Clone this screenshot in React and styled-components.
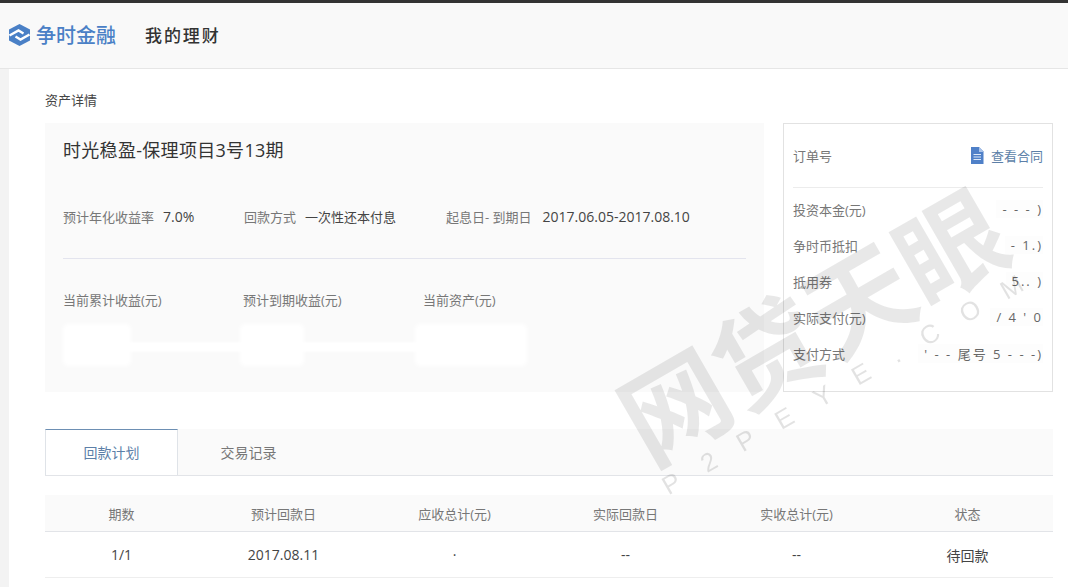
import React from "react";
import styled, { createGlobalStyle } from "styled-components";

const Global = createGlobalStyle`
  html, body { margin: 0; padding: 0; background: #fff; }
  body { font-family: "Open Sans", "Noto Sans CJK SC", sans-serif; color: #333; width: 1068px; height: 587px; overflow: hidden; }
  * { box-sizing: border-box; }
`;
const Page = styled.div`position: relative; width: 1068px; height: 587px; overflow: hidden; border-top: 3px solid #333;`;
const Header = styled.header`
  height: 66px; background: #f9f9f9; border-bottom: 1px solid #e6e6e6;
  display: flex; align-items: center; padding: 0 0 2px 8px;
`;
const Brand = styled.div`display: flex; align-items: center; gap: 5px; width: 137px; color: #4a80c6; font-size: 20px; font-weight: 500;`;
const PageName = styled.div`font-size: 17px; font-weight: 500; letter-spacing: 1.9px; color: #333;`;
const Body = styled.div`display: flex; height: 518px;`;
const Rail = styled.div`width: 9px; background: #f3f3f3;`;
const Main = styled.main`flex: 1; padding: 21px 15px 0 36px;`;
const Crumb = styled.div`font-size: 13px; line-height: 20px; color: #444; height: 33px;`;
const Top = styled.section`display: flex; gap: 19px; height: 269px;`;
const Card = styled.div`position: relative; width: 719px; background: #fafafa; padding: 14px 18px 0;`;
const Title = styled.h1`margin: 0; font-size: 18px; font-weight: 400; line-height: 26px; color: #333; letter-spacing: .3px;`;
const Facts = styled.div`display: flex; margin-top: 43px; height: 40px;`;
const Fact = styled.div`display: flex; align-items: center; gap: ${p => p.$gap || 8}px; width: ${p => p.$w}px; height: 20px; white-space: nowrap;`;
const Label = styled.span`font-size: 13px; color: #777;`;
const Value = styled.span`font-size: ${p => p.$size || 14}px; color: #444;`;
const Rule = styled.div`height: 1px; background: #e3e4ee; margin-top: 12px;`;
const Metrics = styled.div`display: flex; margin-top: 29px;`;
const Metric = styled.div`width: 180px;`;
const Blob = styled.div`
  margin-top: 14px; margin-left: ${p => p.$x || 0}px; width: ${p => p.$w}px; height: 42px;
  background: #fff; border-radius: 5px; filter: blur(2px);
`;
const Band = styled.div`position: absolute; left: 70px; top: 219px; width: 340px; height: 10px; background: #fff; filter: blur(1px);`;
const Side = styled.aside`flex: 1; border: 1px solid #e2e2e2; background: #fff; padding: 0 9px;`;
const OrderRow = styled.div`display: flex; align-items: center; height: 64px; padding-bottom: 1px; border-bottom: 1px solid #ececec;`;
const Order = styled.span`font-size: 13px; color: #777; margin-right: auto;`;
const Contract = styled.a`display: flex; align-items: center; gap: 7px; font-size: 13px; color: #5c7fa8;`;
const Rows = styled.div`padding-top: 3px;`;
const Row = styled.div`display: flex; justify-content: space-between; align-items: center; height: 36px;`;
const Smudge = styled.span`font-size: 13px; color: #666; background: #fdfdfd; padding-left: 6px; letter-spacing: 2px; white-space: nowrap;`;
const Tabs = styled.nav`display: flex; height: 47px; margin-top: 37px; background: #fafafa; border-bottom: 1px solid #e2e4e8;`;
const Tab = styled.div`
  width: ${p => p.$w}px; height: 46px; display: flex; align-items: center; justify-content: center; font-size: 14px; padding-bottom: 1px;
  color: ${p => p.$on ? "#5c7fa8" : "#777"};
  background: ${p => p.$on ? "#fff" : "transparent"};
  border: ${p => p.$on ? "1px solid #dfe3e8" : "0"};
  border-top: ${p => p.$on ? "1px solid #6d8fb3" : "0"};
  border-bottom: 0;
`;
const Grid = styled.div`
  display: grid; grid-template-columns: 153px repeat(5, 171px); align-items: center; text-align: center;
  height: ${p => p.$h}px; margin-top: ${p => p.$mt || 0}px;
  background: ${p => p.$head ? "#fafafa" : "#fff"};
  border-bottom: 1px solid ${p => p.$head ? "#e2e4e8" : "#eeeeee"};
  font-size: ${p => p.$head ? 13 : 14}px; color: ${p => p.$head ? "#777" : "#444"};
`;
const Mark = styled.svg`position: absolute; left: 0; top: -3px; width: 1068px; height: 587px; pointer-events: none;`;
const WmTitle = styled.text`font-family: "Noto Sans CJK SC", sans-serif; font-weight: 700; font-size: 106px; fill: #000; opacity: .085;`;
const WmSub = styled.text`font-family: "Liberation Sans", sans-serif; font-size: 26px; fill: #000; opacity: .11;`;

const Logo = () => (
  <svg width="23" height="24" viewBox="0 0 23 24">
    <path d="M11.5 1 22 6.5v11L11.5 23 1 17.5v-11Z" fill="#4a80c6" />
    <path d="M1.5 12.5 10.5 7.5 15.5 10.5M21.5 11.5 12.5 16.5 7.5 13.5" fill="none" stroke="#fff" strokeWidth="2.4" />
  </svg>
);
const DocIcon = () => (
  <svg width="14" height="17" viewBox="0 0 14 17">
    <path d="M1 0h8l4.5 4.5V17H1Z" fill="#4f80c8" />
    <path d="M9 0v5h4.5" fill="#a9c3ea" />
    <path d="M3.5 7.5h7.5M3.5 10h7.5M3.5 12.5h7.5" stroke="#dce8f8" strokeWidth="1" />
  </svg>
);

const sideRows = [
  ["投资本金(元)", "- - - )"],
  ["争时币抵扣", "- 1.)"],
  ["抵用券", "5.. )"],
  ["实际支付(元)", "/ 4 ' 0"],
  ["支付方式", "' - - 尾号 5 - - -)"],
];
const cols = ["期数", "预计回款日", "应收总计(元)", "实际回款日", "实收总计(元)", "状态"];
const cells = ["1/1", "2017.08.11", "·", "--", "--", "待回款"];

export default function App() {
  return (
    <Page>
      <Global />
      <Header>
        <Brand><Logo />争时金融</Brand>
        <PageName>我的理财</PageName>
      </Header>
      <Body>
        <Rail />
        <Main>
          <Crumb>资产详情</Crumb>
          <Top>
            <Card>
              <Title>时光稳盈-保理项目3号13期</Title>
              <Facts>
                <Fact $w={181} $gap={9}><Label>预计年化收益率</Label><Value>7.0%</Value></Fact>
                <Fact $w={202} $gap={9}><Label>回款方式</Label><Value $size={13}>一次性还本付息</Value></Fact>
                <Fact $w={300} $gap={11}><Label>起息日- 到期日</Label><Value>2017.06.05-2017.08.10</Value></Fact>
              </Facts>
              <Rule />
              <Metrics>
                <Metric><Label>当前累计收益(元)</Label><Blob $w={68} /></Metric>
                <Metric><Label>预计到期收益(元)</Label><Blob $w={64} $x={-3} /></Metric>
                <Metric><Label>当前资产(元)</Label><Blob $w={112} $x={-8} /></Metric>
              </Metrics>
              <Band />
            </Card>
            <Side>
              <OrderRow>
                <Order>订单号</Order>
                <Contract><DocIcon />查看合同</Contract>
              </OrderRow>
              <Rows>
                {sideRows.map(([k, v]) => (
                  <Row key={k}><Label>{k}</Label><Smudge>{v}</Smudge></Row>
                ))}
              </Rows>
            </Side>
          </Top>
          <Tabs>
            <Tab $on $w={133}>回款计划</Tab>
            <Tab $w={141}>交易记录</Tab>
          </Tabs>
          <Grid $head $h={37} $mt={19}>
            {cols.map(c => <div key={c}>{c}</div>)}
          </Grid>
          <Grid $h={46}>
            {cells.map((c, i) => <div key={i}>{c}</div>)}
          </Grid>
        </Main>
      </Body>
      <Mark viewBox="0 0 1068 587">
        <g transform="rotate(-30 815 330)">
          <WmTitle x="815" y="366" textAnchor="middle">网贷天眼</WmTitle>
          <WmSub x="825" y="400" textAnchor="middle" letterSpacing="27">P2PEYE.COM</WmSub>
        </g>
      </Mark>
    </Page>
  );
}
